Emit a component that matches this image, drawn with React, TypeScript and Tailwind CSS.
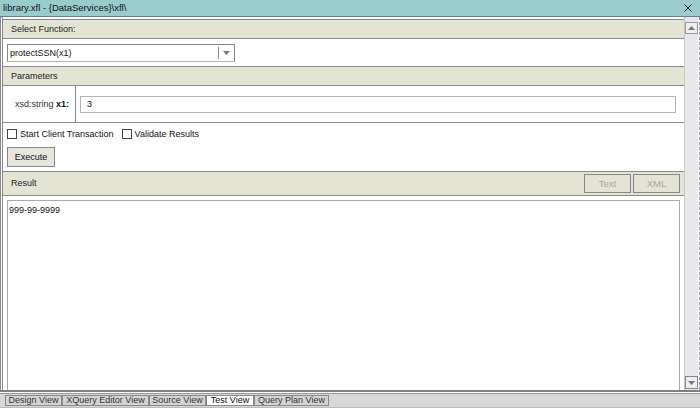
import React from "react";

const font = { fontFamily: '"Liberation Sans", Arial, sans-serif' };

function Header({ label }: { label: string }) {
  return (
    <div className="flex h-[20px] shrink-0 items-center border-y border-[#8a8a8a] bg-[#e4e4d4] pl-[8px]">
      <span className="text-[#222]">{label}</span>
    </div>
  );
}

function Checkbox({ label }: { label: string }) {
  return (
    <label className="flex items-center gap-[3px]">
      <span className="block h-[10px] w-[10px] border border-[#444] bg-white" />
      <span>{label}</span>
    </label>
  );
}

function Arrow({ down }: { down?: boolean }) {
  return (
    <svg width="7" height="4" viewBox="0 0 7 4">
      {down ? <polygon points="0,0 7,0 3.5,4" fill="#777" /> : <polygon points="0,4 7,4 3.5,0" fill="#777" />}
    </svg>
  );
}

const tabs = [
  { name: "Design View", w: "w-[57px]" },
  { name: "XQuery Editor View", w: "w-[87px]" },
  { name: "Source View", w: "w-[57px]" },
  { name: "Test View", w: "w-[48px]", active: true },
  { name: "Query Plan View", w: "w-[75px]" },
];

export default function App() {
  return (
    <div className="flex h-[408px] w-[700px] flex-col overflow-hidden bg-white text-[9px] leading-none text-[#111]" style={font}>
      {/* title bar */}
      <div className="flex h-[17px] shrink-0 items-center justify-between border-b border-[#6f7a96] bg-[#99cccc] pl-[3px] pr-[8px]">
        <span className="text-[9.5px]">library.xfl - {"{DataServices}"}\xfl\</span>
        <svg width="8" height="8" viewBox="0 0 8 8">
          <path d="M0.5 0.5 L7.5 7.5 M7.5 0.5 L0.5 7.5" stroke="#111" strokeWidth="1" />
        </svg>
      </div>

      {/* body */}
      <div className="flex h-[373px] shrink-0 border-l border-[#888]">
        <div className="w-[1px] bg-white" />
        <div className="flex flex-1 flex-col border-l border-[#888] pt-[2px]">
          <Header label="Select Function:" />
          <div className="h-[27px] shrink-0 pl-[4px] pt-[5px]">
            <div className="flex h-[18px] w-[228px] items-center border border-[#888] border-b-[#b4b4b4] bg-white">
              <span className="flex-1 pl-[2px]">protectSSN(x1)</span>
              <div className="flex h-[12px] w-[16px] items-center justify-center border-l border-[#888]">
                <Arrow down />
              </div>
            </div>
          </div>
          <Header label="Parameters" />
          <div className="flex h-[37px] shrink-0 border-b border-[#8a8a8a]">
            <div className="flex w-[73px] items-center justify-end border-r border-[#888] pr-[6px] text-[#333]">
              xsd:string&nbsp;<b className="text-[#111]">x1:</b>
            </div>
            <div className="flex flex-1 items-center pl-[4px] pr-[8px]">
              <div className="flex h-[17px] w-full items-center border border-[#b4b4b4] pl-[6px]">3</div>
            </div>
          </div>
          <div className="mt-[5px] flex h-[12px] shrink-0 items-center gap-[8px] pl-[4px]">
            <Checkbox label="Start Client Transaction" />
            <Checkbox label="Validate Results" />
          </div>
          <div className="mt-[7px] shrink-0 pl-[4px]">
            <button className="h-[20px] w-[48px] border border-[#888] bg-[#e6e6de] text-[9px]">Execute</button>
          </div>
          <div className="mt-[4px] flex h-[25px] shrink-0 items-center justify-between border-y border-[#8a8a8a] bg-[#e4e4d4] pl-[8px] pr-[4px]">
            <span className="text-[#222]">Result</span>
            <div className="flex gap-[2px]">
              <button className="h-[19px] w-[47px] border border-[#888] text-[9.5px] text-[#a8a8a8]">Text</button>
              <button className="h-[19px] w-[47px] border border-[#888] text-[9.5px] text-[#a8a8a8]">XML</button>
            </div>
          </div>
          <div className="mx-[4px] mt-[4px] flex-1 border border-b-0 border-[#a8a8a8] pl-[1px] pt-[5px]">
            999-99-9999
          </div>
        </div>
        {/* scrollbar */}
        <div className="flex w-[14px] flex-col border-l border-[#c8c8c8] bg-[#e8e8e8] pt-[5px]">
          <div className="flex h-[12px] items-center justify-center border border-[#999] bg-[#eeeeee]">
            <Arrow />
          </div>
          <div className="flex-1" />
          <div className="mb-[1px] flex h-[13px] items-center justify-center border border-[#888] bg-[#eeeeee]">
            <Arrow down />
          </div>
        </div>
        <div className="w-[2px] border-r border-dashed border-[#9a9ac0]" />
      </div>

      {/* bottom tabs */}
      <div className="h-[2px] shrink-0 bg-[#808080]" />
      <div className="h-[1px] shrink-0 bg-white" />
      <div className="flex flex-1 items-start border-t border-b border-[#999] border-b-[#bbb] bg-[#d8d8d8] pl-[5px] pt-[1px]">
        {tabs.map((t) => (
          <div
            key={t.name}
            className={`${t.w} flex h-[11px] items-center justify-center border border-[#888] text-[9px] ${
              t.active ? "bg-white text-[#111]" : "bg-[#d4d4d4] text-[#333]"
            }`}
          >
            {t.name}
          </div>
        ))}
      </div>
    </div>
  );
}
